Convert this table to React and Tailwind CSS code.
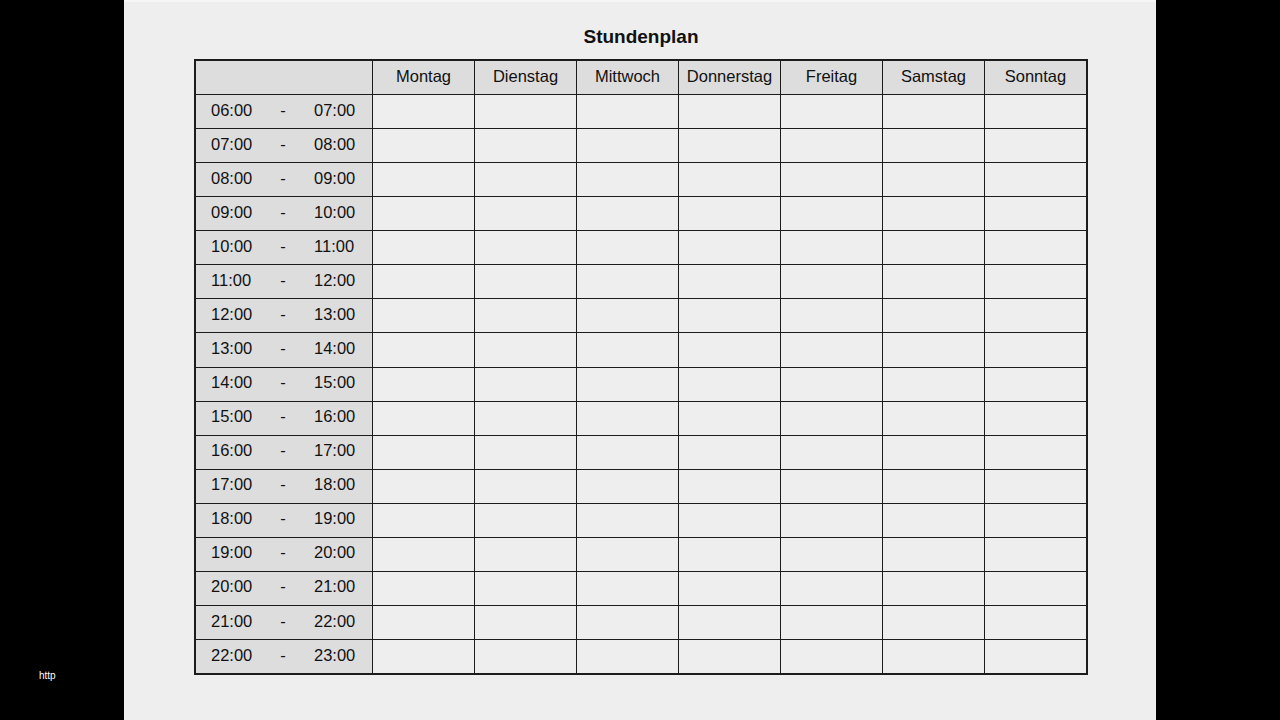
import React from "react";

const days = ["Montag", "Dienstag", "Mittwoch", "Donnerstag", "Freitag", "Samstag", "Sonntag"];
const hours = Array.from({ length: 17 }, (_, i) => i + 6);
const pad = (n) => String(n).padStart(2, "0") + ":00";

export default function App() {
  return (
    <div className="flex h-[720px] w-[1280px] overflow-hidden" style={{ fontFamily: '"Liberation Sans", Arial, sans-serif' }}>
      {/* left bar */}
      <div className="w-[124px] shrink-0 bg-black pl-[39px] pt-[662px]">
        <span className="text-[10px] leading-none text-white">http</span>
      </div>

      {/* sheet */}
      <div className="w-[1032px] shrink-0 border-t-2 border-[#f6f6f6] bg-[#eeeeee] pl-[70px]">
        <h1 className="w-[894px] pt-[24px] text-center text-[19px] font-bold leading-[22px] text-[#111]">
          Stundenplan
        </h1>

        <div className="mt-[11px] grid h-[616px] w-[894px] grid-cols-[176px_repeat(7,101px)] grid-rows-[repeat(18,1fr)] gap-px border-2 border-[#1c1c1c] bg-[#1c1c1c] text-[16.5px] text-[#111]">
          <div className="bg-[#dddddd]" />
          {days.map((d) => (
            <div key={d} className="flex items-center justify-center bg-[#dddddd] pb-[3px]">
              {d}
            </div>
          ))}

          {hours.map((h) => (
            <React.Fragment key={h}>
              <div className="flex items-center bg-[#dddddd] pb-[3px] pl-[15px]">
                <span className="w-[66px]">{pad(h)}</span>
                <span className="w-[12px] text-center">-</span>
                <span className="ml-[25px]">{pad(h + 1)}</span>
              </div>
              {days.map((d) => (
                <div key={d} className="bg-[#eeeeee]" />
              ))}
            </React.Fragment>
          ))}
        </div>
      </div>

      {/* right bar */}
      <div className="flex-1 bg-black" />
    </div>
  );
}
